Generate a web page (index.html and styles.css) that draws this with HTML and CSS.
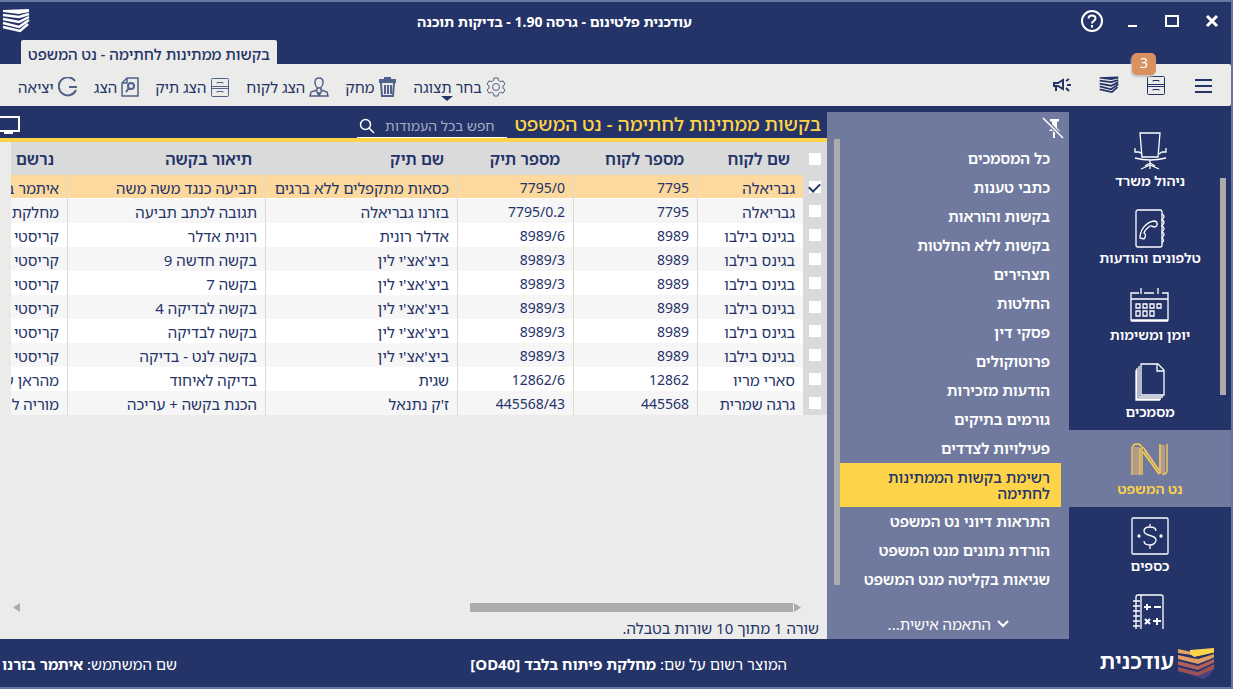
FILE: index.html
```
<!DOCTYPE html>
<html lang="he" dir="rtl">
<head>
    <meta charset="UTF-8">
    <meta name="viewport" content="width=device-width, initial-scale=1.0">
    <title>עודכנית פלטינום - גרסה 1.90 - בדיקות תוכנה</title>
    <link rel="stylesheet" href="styles.css">
</head>
<body>
<!-- shared icons -->
<svg class="sprite" aria-hidden="true">
    <symbol id="books" viewBox="0 0 28 24">
        <path d="M1 1l26-1v3l-10 2-16-2z" fill="currentColor"/>
        <path d="M1 6l16 2 10-3M1 10l16 3 10-5M1 14l16 4 10-7M1 18l17 4 8-7" fill="none" stroke="currentColor" stroke-width="2.500"/>
    </symbol>
    <symbol id="cabinet" viewBox="0 0 20 20">
        <g fill="none" stroke="currentColor">
            <rect x="1.500" y="1.500" width="17" height="18" rx="1"/>
            <path d="M1 9.500h18M1 11.500h18M7 6.500v-1h6v1M7 15.500v-1h6v1"/>
        </g>
    </symbol>
</svg>
<div class="window">
    <header class="titlebar">
        <div class="titlebar-top">
            <div class="window-buttons">
                <button type="button" aria-label="סגור"><svg width="14" height="14" viewBox="0 0 14 14"><path d="M2 2l10 10M12 2L2 12" stroke="#fff" stroke-width="3"/></svg></button>
                <button type="button" aria-label="הגדל"><svg width="14" height="14" viewBox="0 0 14 14"><path d="M1 2h12v10H1z" fill="none" stroke="#fff" stroke-width="2"/></svg></button>
                <button type="button" aria-label="מזער"><svg width="14" height="14" viewBox="0 0 14 14"><path d="M3 12h9" stroke="#fff" stroke-width="2"/></svg></button>
                <button type="button" aria-label="עזרה"><svg width="24" height="24" viewBox="0 0 24 24" fill="none" stroke="#fff" stroke-width="2"><circle cx="12" cy="12" r="10"/><path d="M8.500 9.500c0-4 7-4 7 0 0 2.500-3.500 2.500-3.500 5M12 16v2.500"/></svg></button>
            </div>
            <h1>עודכנית פלטינום - גרסה 1.90 - בדיקות תוכנה</h1>
            <svg class="app-icon" width="28" height="24"><use href="#books"/></svg>
        </div>
        <a class="tab" href="#">בקשות ממתינות לחתימה - נט המשפט</a>
    </header>

    <div class="toolbar">
        <div class="shortcuts">
            <button type="button" aria-label="תפריט"><svg width="20" height="20" viewBox="0 0 20 20"><path d="M2 5h17M2 11h17M2 17h17" stroke="currentColor" stroke-width="2"/></svg></button>
            <button type="button" aria-label="תיקים" class="with-badge"><svg width="20" height="20"><use href="#cabinet"/></svg><span class="badge">3</span></button>
            <button type="button" aria-label="ספרים"><svg width="20" height="18"><use href="#books"/></svg></button>
            <button type="button" aria-label="הודעות"><svg width="20" height="20" viewBox="0 0 20 20" fill="none" stroke="currentColor" stroke-width="2"><path d="M2 8h4l5-3v9l-5-3H2zM4 11v5M14 6l3-2M15 10h4M14 13l3 3"/></svg></button>
        </div>
        <div class="actions">
            <button type="button" class="has-menu"><svg width="20" height="20" viewBox="0 0 20 20" fill="none" stroke="currentColor"><circle cx="10" cy="10" r="3.500"/><path d="M8 1h4l.5 2.500 2 1.200 2.500-.9 2 3.400-2 1.800v2l2 1.800-2 3.400-2.500-.9-2 1.200L12 19H8l-.5-2.500-2-1.200-2.500.9-2-3.400L3 11V9L1 7.200l2-3.400 2.500.9 2-1.200z"/></svg>בחר תצוגה</button>
            <button type="button"><svg width="19" height="20" viewBox="0 0 19 20" fill="none" stroke="currentColor" stroke-width="2"><path d="M1 3h17M7 3V1h5v2M1 5h17M3 6l1 13h11l1-13M7 8v9M10 8v9M13 8v9"/></svg>מחק</button>
            <button type="button"><svg width="20" height="20" viewBox="0 0 20 20" fill="none" stroke="currentColor" stroke-width="1.500"><path d="M10 1c-3 0-4 2-4 4 0 3 1.500 6 4 6s4-3 4-6c0-2-1-4-4-4zM8 11v2l-6 2-1 4h18l-1-4-6-2v-2M7 13l3 6 3-6M10 15v3"/></svg>הצג לקוח</button>
            <button type="button"><svg width="20" height="20"><use href="#cabinet"/></svg>הצג תיק</button>
            <button type="button"><svg width="18" height="20" viewBox="0 0 18 20" fill="none" stroke="currentColor" stroke-width="1.500"><path d="M6 1h11v18H1V6zM6 1v5H1"/><circle cx="10" cy="9" r="3" stroke-width="2"/><path d="M8 11l-3 4" stroke-width="2"/></svg>הצג</button>
            <button type="button"><svg width="20" height="20" viewBox="0 0 20 20" fill="none" stroke="currentColor" stroke-width="2"><path d="M17 4a9 9 0 1 0 1 9M11 10h8"/></svg>יציאה</button>
        </div>
    </div>

    <div class="main">
        <nav class="modules">
            <a href="#"><svg width="40" height="40" viewBox="0 0 40 40"><path d="M10 2h20l-2 24H12zM5 17v4h4l3 2M36 17v4h-4l-3 2M5 27q15 4 31 0M20 29v9M20 34l-9 4M20 34l9 4M20 32l-5 3M20 32l5 3"/></svg>ניהול משרד</a>
            <a href="#"><svg width="40" height="40" viewBox="0 0 40 40"><rect x="6" y="2" width="26" height="37" rx="2"/><path d="M32 6q4 2 0 6 4 1 0 6 4 2 0 6 4 2 0 6 3 2 0 5M10 30c0-8 6-16 14-17 4 0 4 5 1 6-3 0-4-2-5-1-3 2-5 4-6 7 2 1 2 3 0 6z"/></svg>טלפונים והודעות</a>
            <a href="#"><svg width="40" height="40" viewBox="0 0 40 40"><path d="M9 8H1v27h37V8h-6M14 8h10M1 14h37M11 3v6M28 3v6M1 36h37"/><path d="M6 19h4v4H6zM13 19h4v4h-4zM20 19h4v4h-4zM27 19h4v4h-4zM6 26h4v5H6zM13 26h4v5h-4zM20 26h4v5h-4z"/></svg>יומן ומשימות</a>
            <a href="#"><svg width="40" height="40" viewBox="0 0 40 40"><path d="M11 2h17l6 6v25H11zM27 2v7h7M9 4v31h24M7 6v31h24M6 8v30h24"/></svg>מסמכים</a>
            <a href="#" class="active"><svg width="40" height="40" viewBox="0 0 40 40"><path d="M3 8h7v28H3zM29 6h6v28h-6zM14 8l15 22v5L14 14z" class="shade"/><path d="M2 36V9q1-4 5-4t5 4v27M10 9v27M13 8l16 23M13 13l16 22M30 5v30M37 5v27q-1 4-5 3"/></svg>נט המשפט</a>
            <a href="#"><svg width="40" height="40" viewBox="0 0 40 40"><rect x="2" y="2" width="36" height="36" rx="1"/><path d="M26 15c0-3-3-4-6-4-4 0-6 2-6 4 0 6 12 3 12 9 0 3-3 5-6 5-4 0-6-2-6-4M20 8v3M20 29v4"/><circle cx="9" cy="20" r="1"/><circle cx="31" cy="20" r="1"/></svg>כספים</a>
            <a href="#" aria-label="חישובים"><svg width="40" height="40" viewBox="0 0 40 40"><path d="M33 40V4q0-2-2-2H8q-2 0-2 2v36M11 2v38M3 8h7M3 13h7M3 18h7M3 23h7M3 28h7M3 33h7"/><path d="M14 14h7M17 11v6M24 14h7M15 26l5 5M20 26l-5 5M23 28h8M27 25v7" stroke-width="2"/></svg></a>
            <span class="scroll-thumb"></span>
        </nav>

        <aside class="sidebar">
            <div class="sidebar-head">
                <button type="button" aria-label="הצמד"><svg width="22" height="22" viewBox="0 0 22 22"><path d="M8 2h9v2l-2 1v6l3 3H7l3-3V5L8 4zM11 14h2v7h-2z" fill="#fff"/><path d="M1 1l20 20" stroke="#707a9e" stroke-width="4"/><path d="M1 1l20 20" stroke="#fff" stroke-width="1.500"/></svg></button>
            </div>
            <ul>
                <li><a href="#">כל המסמכים</a></li>
                <li><a href="#">כתבי טענות</a></li>
                <li><a href="#">בקשות והוראות</a></li>
                <li><a href="#">בקשות ללא החלטות</a></li>
                <li><a href="#">תצהירים</a></li>
                <li><a href="#">החלטות</a></li>
                <li><a href="#">פסקי דין</a></li>
                <li><a href="#">פרוטוקולים</a></li>
                <li><a href="#">הודעות מזכירות</a></li>
                <li><a href="#">גורמים בתיקים</a></li>
                <li><a href="#">פעילויות לצדדים</a></li>
                <li><a href="#" class="active">רשימת בקשות הממתינות לחתימה</a></li>
                <li><a href="#">התראות דיוני נט המשפט</a></li>
                <li><a href="#">הורדת נתונים מנט המשפט</a></li>
                <li><a href="#">שגיאות בקליטה מנט המשפט</a></li>
            </ul>
            <span class="scroll-thumb"></span>
            <button type="button" class="customize"><svg width="12" height="10" viewBox="0 0 12 10"><path d="M1 2l5 5 5-5" fill="none" stroke="#fff" stroke-width="2"/></svg>התאמה אישית...</button>
        </aside>

        <main class="content">
            <div class="content-head">
                <h2>בקשות ממתינות לחתימה - נט המשפט</h2>
                <label class="search">
                    <input type="text" placeholder="חפש בכל העמודות" aria-label="חפש בכל העמודות">
                    <svg width="16" height="16" viewBox="0 0 16 16" fill="none" stroke="#fff" stroke-width="1.500"><circle cx="6.500" cy="6.500" r="5"/><path d="M10 10l5 5"/></svg>
                </label>
                <svg class="monitor" width="20" height="20" viewBox="0 0 20 20"><path d="M0 3h19v14H0" fill="none" stroke="#fff" stroke-width="2"/><path d="M4 18h9v2H4z" fill="#fff"/></svg>
            </div>
            <div class="table-wrap">
                <table>
                    <colgroup>
                        <col class="col-check"><col class="col-client"><col class="col-client-no"><col class="col-case-no"><col class="col-case"><col><col class="col-by">
                    </colgroup>
                    <thead>
                        <tr><th><input type="checkbox" aria-label="בחר הכל"></th><th>שם לקוח</th><th>מספר לקוח</th><th>מספר תיק</th><th>שם תיק</th><th>תיאור בקשה</th><th>נרשם</th></tr>
                    </thead>
                    <tbody>
                        <tr class="selected"><td><input type="checkbox" aria-label="בחר שורה 1" checked></td><td>גבריאלה</td><td class="num">7795</td><td class="num">7795/0</td><td>כסאות מתקפלים ללא ברגים</td><td>תביעה כנגד משה משה</td><td>איתמר ב</td></tr>
                        <tr><td><input type="checkbox" aria-label="בחר שורה 2"></td><td>גבריאלה</td><td class="num">7795</td><td class="num">7795/0.2</td><td>בזרנו גבריאלה</td><td>תגובה לכתב תביעה</td><td>מחלקת</td></tr>
                        <tr><td><input type="checkbox" aria-label="בחר שורה 3"></td><td>בגינס בילבו</td><td class="num">8989</td><td class="num">8989/6</td><td>אדלר רונית</td><td>רונית אדלר</td><td>קריסטי</td></tr>
                        <tr><td><input type="checkbox" aria-label="בחר שורה 4"></td><td>בגינס בילבו</td><td class="num">8989</td><td class="num">8989/3</td><td>ביצ'אצ'י לין</td><td>בקשה חדשה 9</td><td>קריסטי</td></tr>
                        <tr><td><input type="checkbox" aria-label="בחר שורה 5"></td><td>בגינס בילבו</td><td class="num">8989</td><td class="num">8989/3</td><td>ביצ'אצ'י לין</td><td>בקשה 7</td><td>קריסטי</td></tr>
                        <tr><td><input type="checkbox" aria-label="בחר שורה 6"></td><td>בגינס בילבו</td><td class="num">8989</td><td class="num">8989/3</td><td>ביצ'אצ'י לין</td><td>בקשה לבדיקה 4</td><td>קריסטי</td></tr>
                        <tr><td><input type="checkbox" aria-label="בחר שורה 7"></td><td>בגינס בילבו</td><td class="num">8989</td><td class="num">8989/3</td><td>ביצ'אצ'י לין</td><td>בקשה לבדיקה</td><td>קריסטי</td></tr>
                        <tr><td><input type="checkbox" aria-label="בחר שורה 8"></td><td>בגינס בילבו</td><td class="num">8989</td><td class="num">8989/3</td><td>ביצ'אצ'י לין</td><td>בקשה לנט - בדיקה</td><td>קריסטי</td></tr>
                        <tr><td><input type="checkbox" aria-label="בחר שורה 9"></td><td>סארי מריו</td><td class="num">12862</td><td class="num">12862/6</td><td>שגית</td><td>בדיקה לאיחוד</td><td>מהראן ע</td></tr>
                        <tr><td><input type="checkbox" aria-label="בחר שורה 10"></td><td>גרגה שמרית</td><td class="num">445568</td><td class="num">445568/43</td><td>ז'ק נתנאל</td><td>הכנת בקשה + עריכה</td><td>מוריה ל</td></tr>
                    </tbody>
                </table>
            </div>
            <div class="hscroll">
                <svg width="7" height="9" viewBox="0 0 7 9"><path d="M0 0l7 4.500L0 9z"/></svg>
                <span class="bar"></span>
                <svg width="7" height="9" viewBox="0 0 7 9"><path d="M7 0L0 4.500 7 9z"/></svg>
            </div>
            <p class="row-count">שורה 1 מתוך 10 שורות בטבלה.</p>
        </main>
    </div>

    <footer class="statusbar">
        <div class="brand">
            <svg width="36" height="32" viewBox="0 0 36 32">
                <path d="M0 24l20 5 16-7-5 7-6 3z" fill="#4b4180"/>
                <path d="M0 20l20 5v4L0 24zM20 25l16-8v5l-16 7z" fill="#9a5058"/>
                <path d="M0 14l20 5v4L0 18zM20 19l16-7v4l-16 7z" fill="#b0605a"/>
                <path d="M0 8l20 4v5L0 12zM20 12l16-5v4l-16 6z" fill="#e09c62"/>
                <path d="M0 2l14 3v3L0 6z" fill="#e5a368"/><path d="M12 3l24-2v5l-20 4-4-3z" fill="#fdd349"/>
                <path d="M0 13l20 5 16-7M0 19l20 5 16-8M0 7l16 4 20-5" fill="none" stroke="#243368"/>
            </svg>
            <span>עודכנית</span>
        </div>
        <div class="licence">המוצר רשום על שם: <strong>מחלקת פיתוח בלבד [OD40]</strong></div>
        <div class="user">שם המשתמש: <strong>איתמר בזרנו</strong></div>
    </footer>
</div>
</body>
</html>
```
FILE: styles.css
```
* { box-sizing: border-box; }
body { margin: 0; font-family: 'Noto Sans', 'Noto Sans Hebrew', 'Liberation Sans', sans-serif; font-size: 15px; line-height: 20px; color: #243368; background-color: #243368; }
h1, h2, p, ul { margin: 0; padding: 0; }
a { color: inherit; text-decoration: none; }
button { font: inherit; color: inherit; background: none; border: 0; padding: 0; cursor: pointer; }
svg { display: block; flex: none; }
.sprite { display: none; }
.window { display: flex; flex-direction: column; height: 100vh; border: 2px solid #65769f; border-left: 0; background-color: #243368; }

.titlebar { display: flex; flex-direction: column; align-items: flex-end; height: 62px; color: #fff; }
.titlebar-top { display: grid; grid-template-columns: 202px 1fr 80px; align-items: center; width: 100%; height: 38px; }
.titlebar h1 { font-size: 14px; font-weight: 700; text-align: center; padding-top: 2px; }
.window-buttons { display: flex; align-items: center; gap: 16px; padding-right: 7px; }
.window-buttons button { display: flex; justify-content: center; width: 24px; }
.app-icon { justify-self: end; margin-left: 2px; }
.tab { margin-left: 21px; height: 24px; padding: 4px 7px 0; border-radius: 2px 2px 0 0; background-color: #ebebe9; color: #243368; font-weight: 500; }

.toolbar { display: flex; justify-content: space-between; align-items: center; height: 42px; padding: 4px 18px 0; background-color: #ebebe9; border-radius: 0 2px 2px 0; }
.shortcuts { display: flex; gap: 27px; padding-bottom: 4px; }
.with-badge { position: relative; }
.badge { position: absolute; top: -22px; left: -14px; width: 24px; height: 22px; border-radius: 5px; background-color: #d9925f; color: #fff; font-size: 14px; box-shadow: -1px 2px 2px #c4c4c4; }
.actions { display: flex; gap: 16px; }
.actions button { display: flex; align-items: center; gap: 4px; }
.actions svg { color: #52608c; }
.has-menu { position: relative; }
.has-menu::after { content: ""; position: absolute; top: 19px; left: 28px; border: 6px solid transparent; border-top: 5px solid #243368; border-bottom: 0; }

.main { display: flex; flex: 1; min-height: 0; }
.modules { position: relative; width: 162px; padding-top: 16px; overflow: hidden; color: #fff; font-size: 14px; font-weight: 600; margin-bottom: 10px; }
.modules a { display: flex; flex-direction: column; align-items: center; height: 77px; padding-top: 9px; }
.modules svg { fill: none; stroke: currentColor; stroke-width: 1.3; }
.modules .active { background-color: #707a9e; color: #fdd349; }
.modules .shade { fill: #b39a8c; stroke: none; }
.scroll-thumb { position: absolute; width: 6px; background-color: #acaaaa; }
.modules .scroll-thumb { top: 72px; right: 5px; height: 217px; }

.sidebar { position: relative; display: flex; flex-direction: column; width: 242px; margin-top: 6px; background-color: #707a9e; color: #fff; }
.sidebar-head { height: 32px; padding: 5px 5px 0; }
.sidebar ul { flex: 1; list-style: none; padding: 0 8px 0 13px; font-weight: 600; }
.sidebar li a { display: block; padding: 4px 11px 5px; }
.sidebar li .active { padding: 6px 11px; font-weight: 500; line-height: 16px; background-color: #fdd349; color: #243368; }
.sidebar .scroll-thumb { top: 27px; left: 7px; height: 446px; }
.customize { display: flex; align-items: center; gap: 6px; padding: 0 60px 5px 0; }

.content { display: flex; flex-direction: column; flex: 1; min-width: 0; background-color: #ebebe9; }
.content-head { display: flex; align-items: center; height: 36px; padding: 4px 6px 0 0; border-bottom: 4px solid #fdd349; background-color: #243368; }
.content-head h2 { font-size: 19px; font-weight: 500; line-height: 28px; color: #fdd349; }
.search { display: flex; align-items: center; align-self: flex-end; width: 150px; height: 24px; margin-right: 8px; padding: 0 12px 0 2px; border-bottom: 1px solid #fff; }
.search input { flex: 1; min-width: 0; padding: 0; border: 0; background: none; color: #fff; font: inherit; font-size: 14px; outline: none; }
.search input::placeholder { color: #a3abc6; opacity: 1; }
.monitor { margin-right: auto; }

.table-wrap { flex: 1; min-height: 0; margin-left: 11px; overflow: hidden; }
table { width: 100%; table-layout: fixed; border-collapse: separate; border-spacing: 0; }
.col-check { width: 24px; }
.col-client { width: 106px; }
.col-client-no { width: 124px; }
.col-case-no { width: 116px; }
.col-case { width: 192px; }
.col-by { width: 56px; }
th { height: 33px; padding: 0 13px 0 0; background-color: #dadada; font-size: 16px; font-weight: 600; text-align: right; white-space: nowrap; overflow: hidden; }
td { height: 24px; padding: 2px 8px 0 0; border-left: 1px solid #dadada; background-color: #fff; white-space: nowrap; overflow: hidden; }
tr:nth-child(even) td { background-color: #f6f6f6; }
tr.selected td { background-color: #fdd99d; box-shadow: inset 0 -1px #fff; }
td.num { font-size: 14px; }
th:first-child, tbody tr td:first-child { padding: 0; border: 0; background-color: #dadada; box-shadow: none; }
td:last-child { border-left: 0; }
input[type="checkbox"] { appearance: none; display: block; width: 12px; height: 12px; margin: 0 auto; background: #fff; }
input[type="checkbox"]:checked::after { content: ""; display: block; width: 5px; height: 9px; margin: 0 3px; border: solid #243368; border-width: 0 2px 2px 0; transform: rotate(45deg); }

.hscroll { display: flex; align-items: center; gap: 1px; height: 14px; padding: 0 26px 0 13px; fill: #acaaaa; }
.hscroll .bar { width: 41%; height: 9px; background-color: #acaaaa; }
.hscroll svg:last-child { margin-right: auto; }
.row-count { padding: 4px 8px 0; height: 25px; }

.statusbar { display: flex; align-items: center; height: 48px; padding: 2px 0 0 2px; color: #fff; }
.brand { display: flex; align-items: center; gap: 4px; width: 444px; padding-right: 17px; font-size: 22px; font-weight: 600; }
.brand span { padding-bottom: 8px; }
.brand svg { margin-bottom: 2px; }
.user { margin-right: auto; }
```
